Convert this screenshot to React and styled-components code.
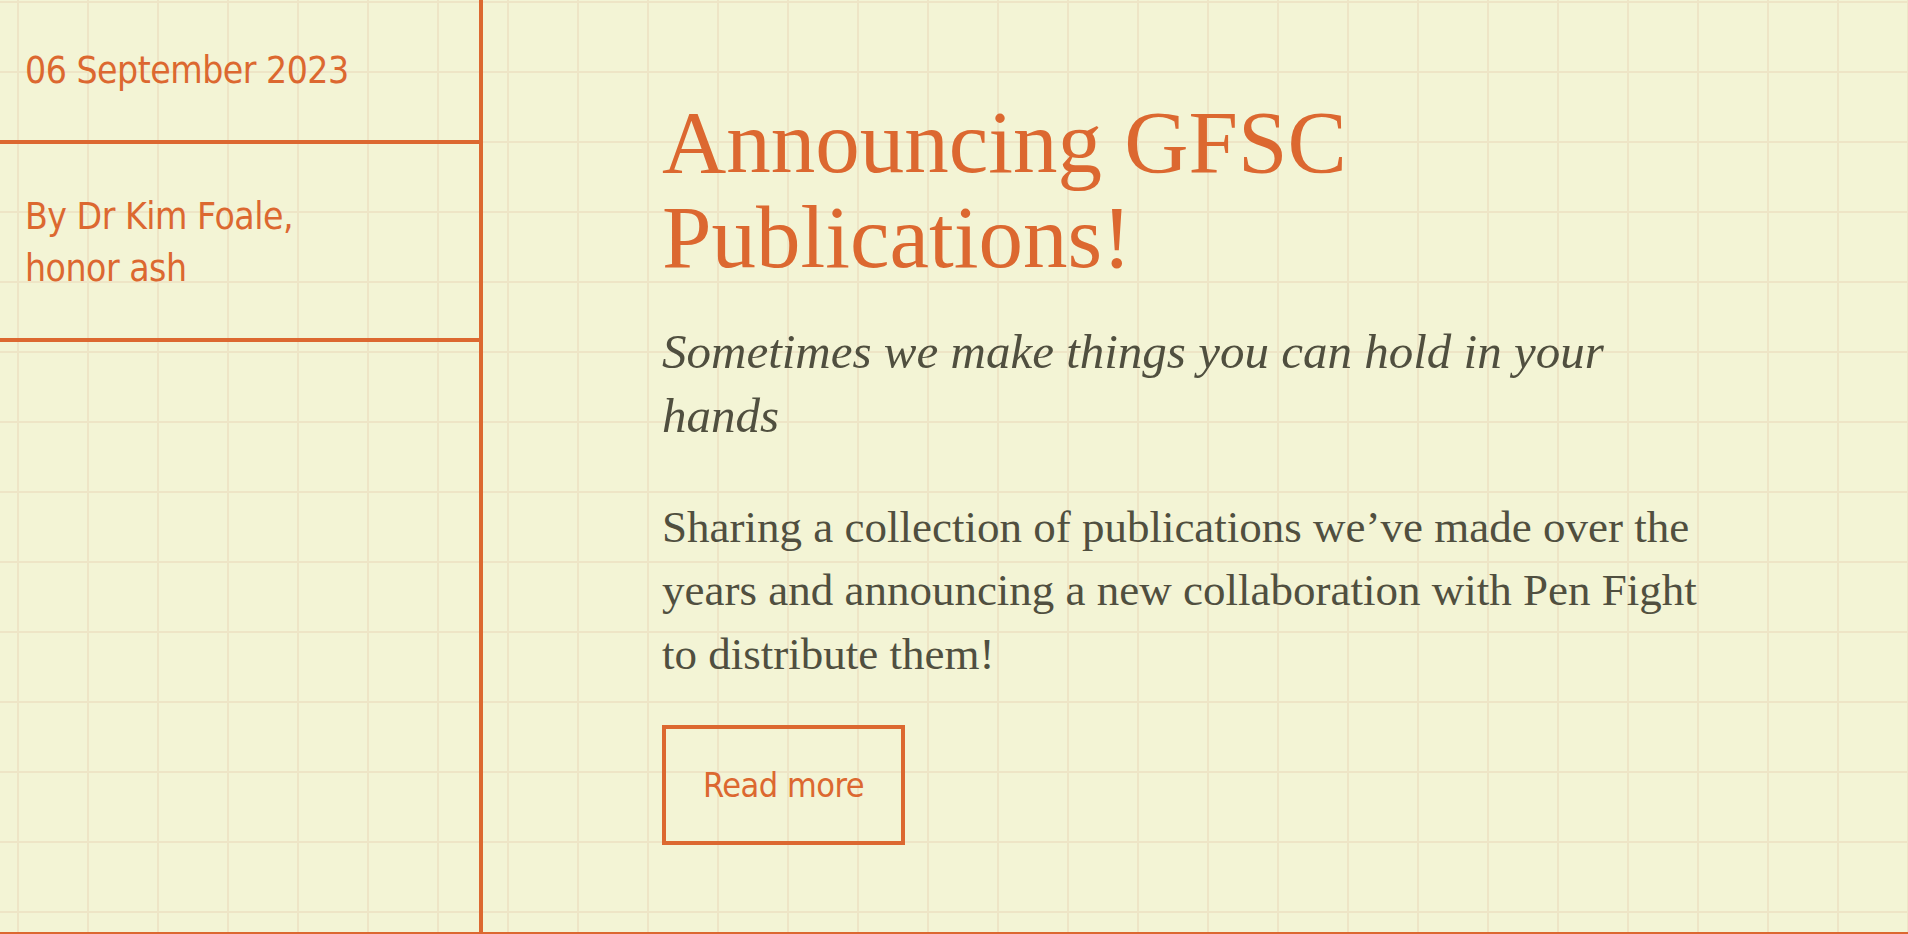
import styled, { createGlobalStyle } from 'styled-components';

const orange = '#DC6830';
const ink = '#504F3F';
const narrow = "'Liberation Sans Narrow', 'DejaVu Sans Condensed', 'Liberation Sans', sans-serif";

const GlobalStyle = createGlobalStyle`
    html, body {
        margin: 0;
        padding: 0;
        overflow: hidden;
    }
    body {
        background-color: #F3F4D5;
        background-image:
            linear-gradient(to right, #EEE5C6 2px, transparent 2px),
            linear-gradient(to bottom, #EEE5C6 2px, transparent 2px);
        background-size: 70px 70px;
        background-position: 17px 1px;
    }
`;

function App() {
    return (
        <>
            <GlobalStyle />
            <Article>
                <Aside>
                    <Meta>06 September 2023</Meta>
                    <Meta $tall>By Dr Kim Foale,<br />honor ash</Meta>
                </Aside>
                <Main>
                    <Title>Announcing GFSC Publications!</Title>
                    <Subtitle>Sometimes we make things you can hold in your hands</Subtitle>
                    <Summary>
                        Sharing a collection of publications we’ve made over the years and
                        announcing a new collaboration with Pen Fight to distribute them!
                    </Summary>
                    <Button href="#">Read more</Button>
                </Main>
            </Article>
        </>
    );
}

export default App;

const Article = styled.article`
    display: flex;
    min-height: 932px;
    border-bottom: 4px solid ${orange};
`

const Aside = styled.aside`
    width: 479px;
    flex-shrink: 0;
    border-right: 4px solid ${orange};
    display: flex;
    flex-direction: column;
`

const Meta = styled.div`
    padding: ${p => (p.$tall ? '47px 0 43px 25px' : '45px 0 43px 25px')};
    border-bottom: 4px solid ${orange};
    font-family: ${narrow};
    font-stretch: condensed;
    font-size: 37px;
    line-height: 52px;
    letter-spacing: -0.5px;
    color: ${orange};
`

const Main = styled.main`
    padding: 95px 0 0 179px;
    width: 1042px;
`

const Title = styled.h1`
    margin: 0 0 35px;
    font-family: 'Liberation Serif', serif;
    font-weight: 400;
    font-size: 89px;
    line-height: 95px;
    color: ${orange};
`

const Subtitle = styled.p`
    margin: 0 0 48px;
    font-family: 'Liberation Serif', serif;
    font-style: italic;
    font-size: 49px;
    line-height: 64px;
    color: ${ink};
`

const Summary = styled.p`
    margin: 0 0 39px;
    font-family: 'Liberation Serif', serif;
    font-size: 45px;
    line-height: 63.3px;
    color: ${ink};
`

const Button = styled.a`
    display: flex;
    align-items: center;
    justify-content: center;
    box-sizing: border-box;
    width: 243px;
    height: 120px;
    border: 4px solid ${orange};
    font-family: ${narrow};
    font-stretch: condensed;
    font-size: 34px;
    letter-spacing: -0.5px;
    color: ${orange};
    text-decoration: none;
`
